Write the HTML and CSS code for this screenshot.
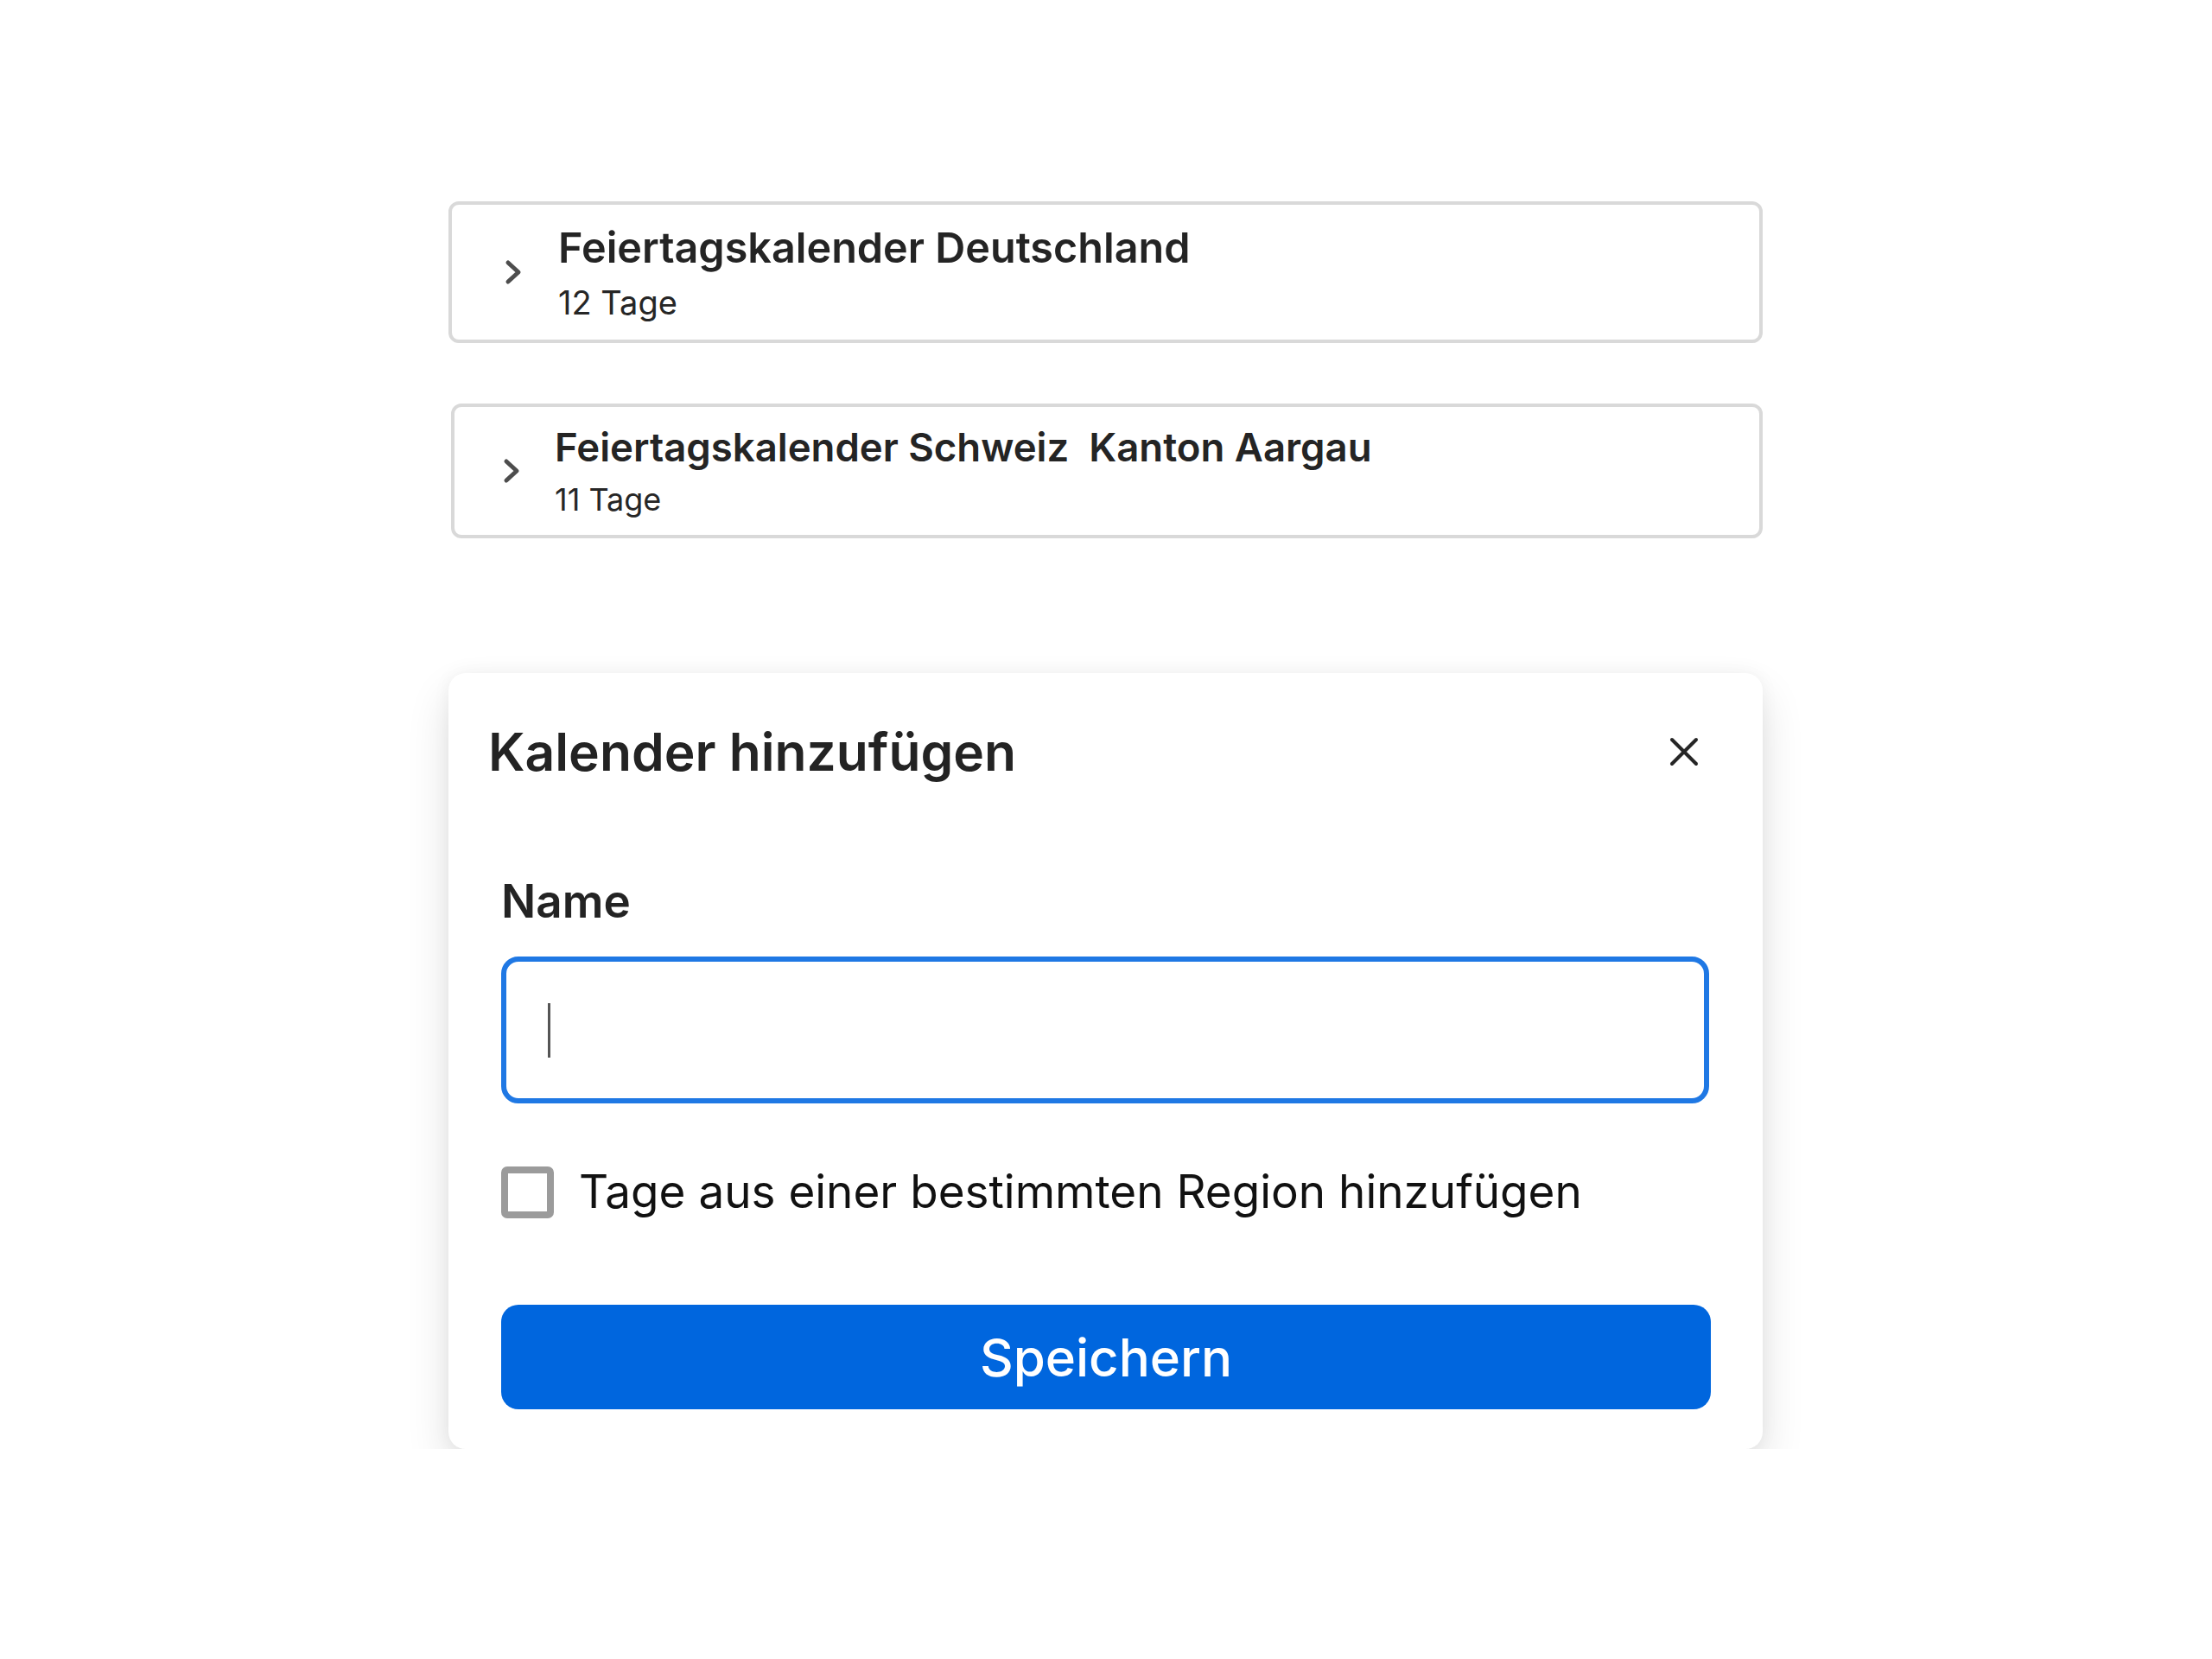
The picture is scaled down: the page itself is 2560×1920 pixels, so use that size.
FILE: index.html
```html
<!DOCTYPE html>
<html lang="de">
<head>
    <meta charset="UTF-8">
    <meta name="viewport" content="width=device-width, initial-scale=1.0">
    <title>Feiertagskalender</title>
    <link rel="stylesheet" href="styles.css">
</head>
<body>
    <div class="page">
        <div class="cal-item">
            <svg class="chevron" width="20" height="32" viewBox="0 0 20 32">
                <polyline points="4,5 16,16 4,27" />
            </svg>
            <div class="cal-text">
                <div class="cal-title">Feiertagskalender Deutschland</div>
                <div class="cal-count">12 Tage</div>
            </div>
        </div>

        <div class="cal-item cal-item--small">
            <svg class="chevron" width="20" height="32" viewBox="0 0 20 32">
                <polyline points="4,5 16,16 4,27" />
            </svg>
            <div class="cal-text">
                <div class="cal-title">Feiertagskalender Schweiz&nbsp; Kanton Aargau</div>
                <div class="cal-count">11 Tage</div>
            </div>
        </div>

        <div class="dialog">
            <div class="dialog-header">
                <h2>Kalender hinzufügen</h2>
                <button class="close-btn" aria-label="Schließen">
                    <svg width="34" height="34" viewBox="0 0 34 34">
                        <line x1="3" y1="3" x2="31" y2="31" />
                        <line x1="31" y1="3" x2="3" y2="31" />
                    </svg>
                </button>
            </div>

            <label class="field-label">Name</label>
            <div class="name-field">
                <span class="caret"></span>
            </div>

            <div class="check-row">
                <span class="checkbox"></span>
                <span class="check-label">Tage aus einer bestimmten Region hinzufügen</span>
            </div>

            <button class="save-btn">Speichern</button>
        </div>
    </div>
</body>
</html>
```

FILE: styles.css
```css
body {
    margin: 0;
    background-color: #ffffff;
    font-family: 'Inter', 'Noto Sans', sans-serif;
    color: #222222;
}
.page {
    width: 1521px;
    margin: 233px 0 0 519px;
}
.cal-item {
    display: flex;
    align-items: center;
    box-sizing: border-box;
    height: 164px;
    padding-left: 61px;
    border: 4px solid #d9d9d9;
    border-radius: 12px;
}
.cal-item .chevron {
    flex-shrink: 0;
    margin-right: 42px;
}
.chevron polyline {
    fill: none;
    stroke: #4d4d4d;
    stroke-width: 5;
    stroke-linecap: round;
    stroke-linejoin: round;
}
.cal-title {
    font-size: 48.5px;
    line-height: 58px;
    font-weight: 600;
    color: #242424;
}
.cal-count {
    margin-top: 11px;
    font-size: 38px;
    line-height: 46px;
    color: #262626;
}
.cal-item--small {
    height: 156px;
    margin-top: 70px;
    margin-left: 3px;
    padding-left: 56px;
}
.cal-item--small .chevron {
    margin-right: 40px;
}
.cal-item--small .cal-title {
    font-size: 45.5px;
    line-height: 54px;
}
.cal-item--small .cal-count {
    margin-top: 12px;
    font-size: 36px;
    line-height: 43px;
}
.dialog {
    display: flex;
    flex-direction: column;
    box-sizing: border-box;
    margin-top: 156px;
    padding: 55px 60px 46px 61px;
    background-color: #ffffff;
    border-radius: 20px;
    box-shadow: 0 24px 50px rgba(0, 0, 0, 0.12), 0 0 20px rgba(0, 0, 0, 0.05);
}
.dialog-header {
    display: flex;
    align-items: center;
    justify-content: space-between;
    margin: 0 14px 0 -15px;
}
.dialog-header h2 {
    margin: 0;
    font-size: 60.5px;
    line-height: 72px;
    font-weight: 600;
    color: #232323;
}
.close-btn {
    padding: 0;
    border: none;
    background: none;
    display: flex;
}
.close-btn line {
    stroke: #262626;
    stroke-width: 4;
    stroke-linecap: round;
}
.field-label {
    margin-top: 106px;
    font-size: 53px;
    line-height: 63px;
    font-weight: 600;
    color: #232323;
}
.name-field {
    display: flex;
    align-items: center;
    box-sizing: border-box;
    height: 170px;
    margin: 32px 2px 0 0;
    padding-left: 48px;
    border: 6px solid #1f78e4;
    border-radius: 20px;
}
.caret {
    width: 3px;
    height: 63px;
    background-color: #555555;
}
.check-row {
    display: flex;
    align-items: center;
    margin-top: 71px;
}
.checkbox {
    box-sizing: border-box;
    width: 61px;
    height: 60px;
    margin-right: 29px;
    border: 8px solid #9b9b9b;
    border-radius: 7px;
}
.check-label {
    font-size: 53px;
    line-height: 63px;
    color: #111111;
}
.save-btn {
    height: 121px;
    margin-top: 99px;
    border: none;
    border-radius: 20px;
    background-color: #0066de;
    color: #ffffff;
    font-family: 'Inter', 'Noto Sans', sans-serif;
    font-size: 60px;
    font-weight: 500;
}
```
